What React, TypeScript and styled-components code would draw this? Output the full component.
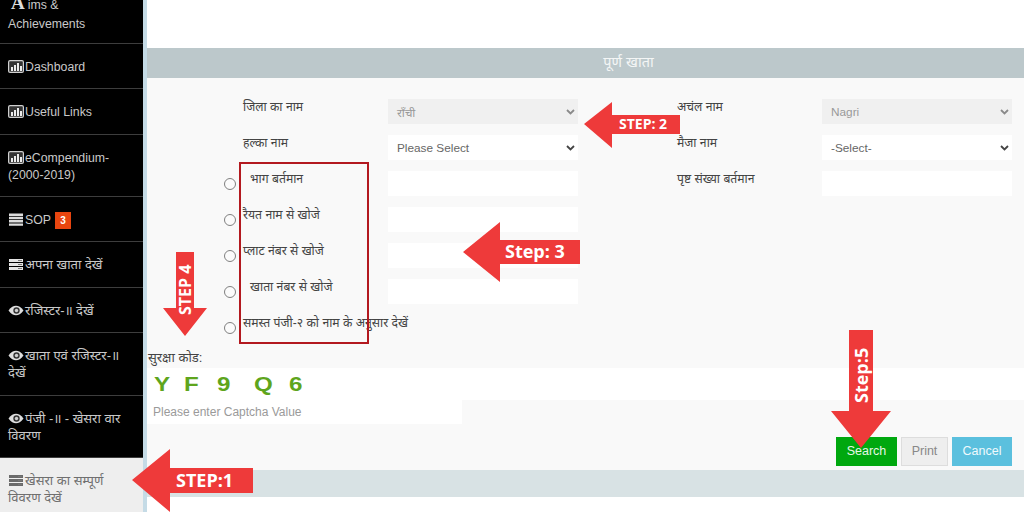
import styled, { createGlobalStyle } from 'styled-components';

const GlobalStyle = createGlobalStyle`
  html, body {
    margin: 0;
    padding: 0;
    width: 1024px;
    height: 512px;
    overflow: hidden;
    background: #fff;
    font-family: "Liberation Sans", "Noto Sans", sans-serif;
  }
`;

const Page = styled.div`
  position: relative;
  display: flex;
  width: 1024px;
  height: 512px;
  overflow: hidden;
`;

const Sidebar = styled.nav`
  flex: 0 0 143px;
  height: 530px;
  margin-top: -18px;
  background: #000;
  border-right: 4px solid #c5dbe6;
`;

const MenuItem = styled.div<{ $active?: boolean; $latin?: boolean }>`
  padding: ${p => (p.$latin ? '15px 6px 12.25px 8px' : '14px 6px 13.5px 8px')};
  font-size: ${p => (p.$latin ? '12.3px' : '13px')};
  line-height: 17px;
  color: ${p => (p.$active ? '#6f6f6f' : '#c9c9c9')};
  background: ${p => (p.$active ? '#eeeeee' : '#000')};
  border-bottom: 1px solid #3d3d3d;
  height: ${p => (p.$active ? '70px' : 'auto')};
`;

const LeadItem = styled(MenuItem)`
  padding: 14px 6px 9px 8px;
  line-height: 19px;
`;

const BigA = styled.span`
  font-family: "Liberation Serif", serif;
  font-weight: 700;
  font-size: 19px;
  line-height: 0;
  color: #ddd;
  margin: 0 3px 0 3px;
`;

const Badge = styled.span`
  display: inline-block;
  width: 16px;
  height: 17px;
  margin: -3px 0 -3px 4px;
  background: #e8450f;
  color: #fff;
  font-size: 10px;
  font-weight: 700;
  line-height: 17px;
  text-align: center;
  vertical-align: middle;
`;

const IconSvg = styled.svg`
  display: inline-block;
  width: 16px;
  height: 13px;
  margin-right: 1px;
  vertical-align: -2px;
`;

const ChartIcon = () => (
  <IconSvg viewBox="0 0 16 13">
    <rect x="0.6" y="0.6" width="14.8" height="11.8" rx="1.5" fill="#333" stroke="#cfcfcf" strokeWidth="1.2" />
    <path d="M3 7h2v4H3zM6 5h2v6H6zM9 3h2v8H9zM12 6h2v5h-2z" fill="#ececec" />
  </IconSvg>
);

const ListIcon = () => (
  <IconSvg viewBox="0 0 16 13">
    <path d="M1 0.5h14v2.4H1zM1 3.8h14v2.4H1zM1 7.1h14v2.4H1zM1 10.4h14v2.4H1z" fill="#dcdcdc" />
  </IconSvg>
);

const ServerIcon = ({ color = '#e4e4e4' }: { color?: string }) => (
  <IconSvg viewBox="0 0 16 13">
    <path d="M1 1h14v3H1zM1 5h14v3H1zM1 9h14v3H1z" fill={color} />
    <path d="M10 2h4v1h-4zM10 6h4v1h-4zM10 10h4v1h-4z" fill="#777" />
  </IconSvg>
);

const EyeIcon = () => (
  <IconSvg viewBox="0 0 16 13">
    <path d="M0.5 6.5C3 2.8 5.5 1.8 8 1.8s5 1 7.5 4.7C13 10.2 10.5 11.2 8 11.2S3 10.2.5 6.5z" fill="#dedede" />
    <circle cx="8.5" cy="6.5" r="3.2" fill="#333" />
    <circle cx="8.5" cy="6.5" r="1.7" fill="#cfcfcf" />
  </IconSvg>
);

const Content = styled.main`
  flex: 1;
  display: flex;
  flex-direction: column;
  min-width: 0;
  background: #fff;
`;

const TopSpace = styled.div`
  height: 48px;
`;

const PanelTitle = styled.div`
  height: 30px;
  padding-left: 86px;
  background: #bcc8cb;
  color: #f4f6f6;
  font-size: 14.5px;
  line-height: 28px;
  text-align: center;
`;

const PanelBody = styled.div`
  height: 392px;
  background: #f9f9f9;
  padding-top: 21px;
  box-sizing: border-box;
`;

const FormRow = styled.div`
  display: grid;
  grid-template-columns: 20px 145px 190px 99px 145px 190px;
  align-items: start;
  height: 36px;
  padding-left: 76px;
  font-size: 12.2px;
  color: #444;
`;

const RadioCell = styled.div`
  padding-top: 7px;
  height: 12px;
`;

const Radio = styled.span`
  display: block;
  width: 10px;
  height: 10px;
  margin-left: 1px;
  border: 1px solid #808080;
  border-radius: 50%;
  background: #fbfbfb;
`;

const FieldLabel = styled.div<{ $indent?: number }>`
  padding-left: ${p => p.$indent || 0}px;
  line-height: 17px;
  white-space: nowrap;
`;

const SelectBox = styled.div<{ $disabled?: boolean }>`
  display: flex;
  align-items: center;
  justify-content: space-between;
  height: 25px;
  padding: 0 3px 0 9px;
  background: ${p => (p.$disabled ? '#f0f0f0' : '#fff')};
  color: ${p => (p.$disabled ? '#999' : '#666')};
  font-size: 11.8px;
`;

const Chevron = styled.svg<{ $muted?: boolean }>`
  width: 9px;
  height: 6px;
  fill: none;
  stroke: ${p => (p.$muted ? '#8a8a8a' : '#444')};
  stroke-width: 1.8;
`;

const TextBox = styled.div`
  height: 25px;
  background: #fff;
`;

const CaptchaLabel = styled.div`
  margin: -4px 0 0 1px;
  height: 21px;
  font-size: 13px;
  line-height: 22px;
  color: #444;
`;

const CaptchaStrip = styled.div`
  display: flex;
  align-items: center;
  height: 32px;
  padding-left: 7px;
  background: #fff;
`;

const CaptchaChar = styled.span<{ $gap: number }>`
  width: ${p => p.$gap}px;
  font-size: 21px;
  font-weight: 700;
  color: #5ea51d;
  transform: scaleX(1.15);
  transform-origin: left center;
`;

const CaptchaInput = styled.div`
  width: 309px;
  height: 24px;
  padding-left: 6px;
  background: #fff;
  color: #9a9a9a;
  font-size: 12px;
  line-height: 24px;
`;

const ButtonRow = styled.div`
  display: flex;
  justify-content: flex-end;
  gap: 4px;
  padding: 13px 12px 0 0;
`;

const Button = styled.div<{ $bg: string; $fg: string; $w: number; $line?: string }>`
  width: ${p => p.$w}px;
  height: 29px;
  box-sizing: border-box;
  background: ${p => p.$bg};
  color: ${p => p.$fg};
  border: 1px solid ${p => p.$line || p.$bg};
  font-size: 12.5px;
  line-height: 26px;
  text-align: center;
`;

const PanelFooter = styled.div`
  height: 27px;
  background: #d8e2e4;
`;

const RedBox = styled.div`
  position: absolute;
  left: 239px;
  top: 162px;
  width: 126px;
  height: 178px;
  border: 2px solid #b3191f;
`;

const ArrowSvg = styled.svg<{ $x: number; $y: number }>`
  position: absolute;
  left: ${p => p.$x}px;
  top: ${p => p.$y}px;
  overflow: visible;
`;

const ArrowText = styled.text<{ $size: number }>`
  fill: #fff;
  font-family: "Open Sans", sans-serif;
  font-weight: 700;
  font-size: ${p => p.$size}px;
`;

const RED = '#ee3a3a';

export default function App() {
  return (
    <Page>
      <GlobalStyle />
      <Sidebar>
        <LeadItem $latin><BigA>A</BigA>ims &amp;<br />Achievements</LeadItem>
        <MenuItem $latin><ChartIcon />Dashboard</MenuItem>
        <MenuItem $latin><ChartIcon />Useful Links</MenuItem>
        <MenuItem $latin><ChartIcon />eCompendium-<br />(2000-2019)</MenuItem>
        <MenuItem $latin><ListIcon />SOP<Badge>3</Badge></MenuItem>
        <MenuItem><ServerIcon />अपना खाता देखें</MenuItem>
        <MenuItem><EyeIcon />रजिस्टर-॥ देखें</MenuItem>
        <MenuItem><EyeIcon />खाता एवं रजिस्टर-॥<br />देखें</MenuItem>
        <MenuItem><EyeIcon />पंजी -॥ - खेसरा वार<br />विवरण</MenuItem>
        <MenuItem $active><ServerIcon color="#6a6a6a" />खेसरा का सम्पूर्ण<br />विवरण देखें</MenuItem>
      </Sidebar>
      <Content>
        <TopSpace />
        <PanelTitle>पूर्ण खाता</PanelTitle>
        <PanelBody>
          <FormRow>
            <span />
            <FieldLabel>जिला का नाम</FieldLabel>
            <SelectBox $disabled>राँची<Chevron $muted viewBox="0 0 9 6"><path d="M1 1l3.5 3.5L8 1" /></Chevron></SelectBox>
            <span />
            <FieldLabel>अचंल नाम</FieldLabel>
            <SelectBox $disabled>Nagri<Chevron $muted viewBox="0 0 9 6"><path d="M1 1l3.5 3.5L8 1" /></Chevron></SelectBox>
          </FormRow>
          <FormRow>
            <span />
            <FieldLabel>हल्का नाम</FieldLabel>
            <SelectBox>Please Select<Chevron viewBox="0 0 9 6"><path d="M1 1l3.5 3.5L8 1" /></Chevron></SelectBox>
            <span />
            <FieldLabel>मैजा नाम</FieldLabel>
            <SelectBox>-Select-<Chevron viewBox="0 0 9 6"><path d="M1 1l3.5 3.5L8 1" /></Chevron></SelectBox>
          </FormRow>
          <FormRow>
            <RadioCell><Radio /></RadioCell>
            <FieldLabel $indent={7}>भाग बर्तमान</FieldLabel>
            <TextBox />
            <span />
            <FieldLabel>पृष्ट संख्या बर्तमान</FieldLabel>
            <TextBox />
          </FormRow>
          <FormRow>
            <RadioCell><Radio /></RadioCell>
            <FieldLabel>रैयत नाम से खोजे</FieldLabel>
            <TextBox />
          </FormRow>
          <FormRow>
            <RadioCell><Radio /></RadioCell>
            <FieldLabel>प्लाट नंबर से खोजे</FieldLabel>
            <TextBox />
          </FormRow>
          <FormRow>
            <RadioCell><Radio /></RadioCell>
            <FieldLabel $indent={7}>खाता नंबर से खोजे</FieldLabel>
            <TextBox />
          </FormRow>
          <FormRow>
            <RadioCell><Radio /></RadioCell>
            <FieldLabel>समस्त पंजी-२ को नाम के अनुसार देखें</FieldLabel>
          </FormRow>
          <CaptchaLabel>सुरक्षा कोड:</CaptchaLabel>
          <CaptchaStrip>
            <CaptchaChar $gap={30}>Y</CaptchaChar>
            <CaptchaChar $gap={33}>F</CaptchaChar>
            <CaptchaChar $gap={37}>9</CaptchaChar>
            <CaptchaChar $gap={35}>Q</CaptchaChar>
            <CaptchaChar $gap={20}>6</CaptchaChar>
          </CaptchaStrip>
          <CaptchaInput>Please enter Captcha Value</CaptchaInput>
          <ButtonRow>
            <Button $bg="#00a80f" $fg="#e6f7e6" $w={61}>Search</Button>
            <Button $bg="#eeeeee" $fg="#888" $w={47} $line="#ddd">Print</Button>
            <Button $bg="#5bc0de" $fg="#f0fafd" $w={60}>Cancel</Button>
          </ButtonRow>
        </PanelBody>
        <PanelFooter />
      </Content>

      <RedBox />

      <ArrowSvg $x={584} $y={102} width={96} height={46}>
        <path d="M0 22L28 0v13h68v19H28v14z" fill={RED} />
        <ArrowText $size={14} x={35} y={27}>STEP: 2</ArrowText>
      </ArrowSvg>
      <ArrowSvg $x={463} $y={222} width={117} height={60}>
        <path d="M0 30L37 0v18h80v24H37v18z" fill={RED} />
        <ArrowText $size={18} x={42} y={36}>Step: 3</ArrowText>
      </ArrowSvg>
      <ArrowSvg $x={163} $y={252} width={44} height={84}>
        <path d="M13 0h18v56h13L22 84 0 56h13z" fill={RED} />
        <ArrowText $size={16} transform="translate(28 63) rotate(-90)">STEP 4</ArrowText>
      </ArrowSvg>
      <ArrowSvg $x={831} $y={330} width={60} height={118}>
        <path d="M18 0h24v81h18L30 118 0 81h18z" fill={RED} />
        <ArrowText $size={18} transform="translate(37 73) rotate(-90)">Step:5</ArrowText>
      </ArrowSvg>
      <ArrowSvg $x={132} $y={449} width={121} height={63}>
        <path d="M0 31L38 0v19h83v25H38v19z" fill={RED} />
        <ArrowText $size={18} x={44} y={38}>STEP:1</ArrowText>
      </ArrowSvg>
    </Page>
  );
}
